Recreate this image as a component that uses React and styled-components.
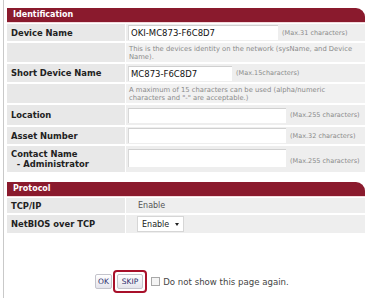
import React from 'react';
import styled, { createGlobalStyle } from 'styled-components';

const Global = createGlobalStyle`
  html, body {
    margin: 0;
    padding: 0;
    background: #ffffff;
  }
  body {
    font-family: "DejaVu Sans", Verdana, sans-serif;
  }
`;

const Frame = styled.div`
  margin-left: 3px;
  height: 298px;
  box-sizing: border-box;
  border-left: 1px solid #c9c9c9;
  padding: 8px 3px 0 3px;
  width: 365px;
`;

const Section = styled.div`
  margin-bottom: ${p => p.$gap || 0}px;
`;

const Header = styled.div`
  height: 14px;
  line-height: 14px;
  background: #8a1a2d;
  border-radius: 0 9px 0 0;
  color: #ffffff;
  font-size: 8px;
  font-weight: bold;
  padding-left: 6px;
  margin-bottom: 2px;
  box-shadow: 0 1px 0 #f3d9dc;
`;

const Grid = styled.div`
  display: grid;
  grid-template-columns: 118px 1fr;
  gap: 2px 1px;
`;

const Label = styled.div`
  background: #e8e8e8;
  font-size: 8.4px;
  font-weight: bold;
  color: #222;
  padding-left: 4px;
  display: flex;
  align-items: ${p => (p.$top ? 'flex-start' : 'center')};
  padding-top: ${p => (p.$top ? 3 : 0)}px;
  height: ${p => p.$h || 17}px;
  box-sizing: border-box;
  line-height: 10px;
`;

const Value = styled.div`
  background: ${p => (p.$light ? '#f1f1f1' : '#eeeeee')};
  display: flex;
  align-items: ${p => (p.$top ? 'flex-start' : 'center')};
  padding: ${p => (p.$top ? '3px' : '0')} 0 0 2px;
  gap: 4px;
  overflow: hidden;
`;

const Input = styled.div`
  width: ${p => p.$w}px;
  height: ${p => p.$h || 15}px;
  background: #ffffff;
  border-top: 1px solid #d0d0d0;
  border-left: 1px solid #d8d8d8;
  box-sizing: border-box;
  font-size: 8.5px;
  color: #111;
  line-height: 14px;
  padding-left: 2px;
  flex-shrink: 0;
`;

const Hint = styled.span`
  font-size: 6.5px;
  color: #8a8a8a;
  white-space: nowrap;
  margin-top: ${p => p.$drop || 0}px;
`;

const Desc = styled.div`
  font-size: 6.8px;
  color: #8a8a8a;
  line-height: 8.5px;
  padding: 1px 4px 0 1px;
`;

const Plain = styled.span`
  font-size: 8px;
  color: #555;
  padding-left: 10px;
`;

const Select = styled.div`
  margin-left: 9px;
  display: flex;
  align-items: center;
  gap: 6px;
  height: 14px;
  padding: 0 4px;
  background: #ffffff;
  border: 1px solid #d6d6d6;
  font-size: 8px;
  color: #222;
`;

const Arrow = styled.span`
  width: 0;
  height: 0;
  border-left: 2.5px solid transparent;
  border-right: 2.5px solid transparent;
  border-top: 3px solid #222;
`;

const Footer = styled.div`
  display: flex;
  align-items: center;
  margin-top: 37px;
  padding-left: 88px;
`;

const Button = styled.div`
  font-size: 7.5px;
  color: #2a2a6a;
  background: linear-gradient(#ffffff, #e4e4ec);
  border: 1px solid #c4c4cc;
  border-radius: 2px;
  padding: ${p => (p.$wide ? '2px 4px' : '2px 2px')};
  line-height: 9px;
`;

const Highlight = styled.div`
  margin-left: 1px;
  border: 2px solid #a8102a;
  border-radius: 4px;
  padding: 2px 2px;
`;

const Check = styled.span`
  width: 9px;
  height: 9px;
  box-sizing: border-box;
  border: 1px solid #a8a8a8;
  background: #f4f4f4;
  margin: 0 3px 0 4px;
`;

const Note = styled.span`
  font-size: 8.6px;
  color: #444;
`;

export default function App() {
  return (
    <>
      <Global />
      <Frame>
        <Section $gap={10}>
          <Header>Identification</Header>
          <Grid>
            <Label>Device Name</Label>
            <Value>
              <Input $w={150}>OKI-MC873-F6C8D7</Input>
              <Hint>(Max.31 characters)</Hint>
            </Value>
            <Label $h={19} />
            <Value $light>
              <Desc>
                This is the devices identity on the network (sysName, and Device
                <br />
                Name).
              </Desc>
            </Value>
            <Label $h={18}>Short Device Name</Label>
            <Value>
              <Input $w={104}>MC873-F6C8D7</Input>
              <Hint>(Max.15characters)</Hint>
            </Value>
            <Label $h={19} />
            <Value $light>
              <Desc>
                A maximum of 15 characters can be used (alpha/numeric
                <br />
                characters and "-" are acceptable.)
              </Desc>
            </Value>
            <Label $h={20}>Location</Label>
            <Value>
              <Input $w={158} />
              <Hint>(Max.255 characters)</Hint>
            </Value>
            <Label $h={17}>Asset Number</Label>
            <Value>
              <Input $w={158} />
              <Hint>(Max.32 characters)</Hint>
            </Value>
            <Label $h={26} $top>
              Contact Name
              <br />
              &nbsp;&nbsp;- Administrator
            </Label>
            <Value $top>
              <Input $w={158} $h={18} />
              <Hint $drop={8}>(Max.255 characters)</Hint>
            </Value>
          </Grid>
        </Section>
        <Section>
          <Header>Protocol</Header>
          <Grid>
            <Label $h={15}>TCP/IP</Label>
            <Value>
              <Plain>Enable</Plain>
            </Value>
            <Label $h={18}>NetBIOS over TCP</Label>
            <Value>
              <Select>
                Enable <Arrow />
              </Select>
            </Value>
          </Grid>
        </Section>
        <Footer>
          <Button>OK</Button>
          <Highlight>
            <Button $wide>SKIP</Button>
          </Highlight>
          <Check />
          <Note>Do not show this page again.</Note>
        </Footer>
      </Frame>
    </>
  );
}
